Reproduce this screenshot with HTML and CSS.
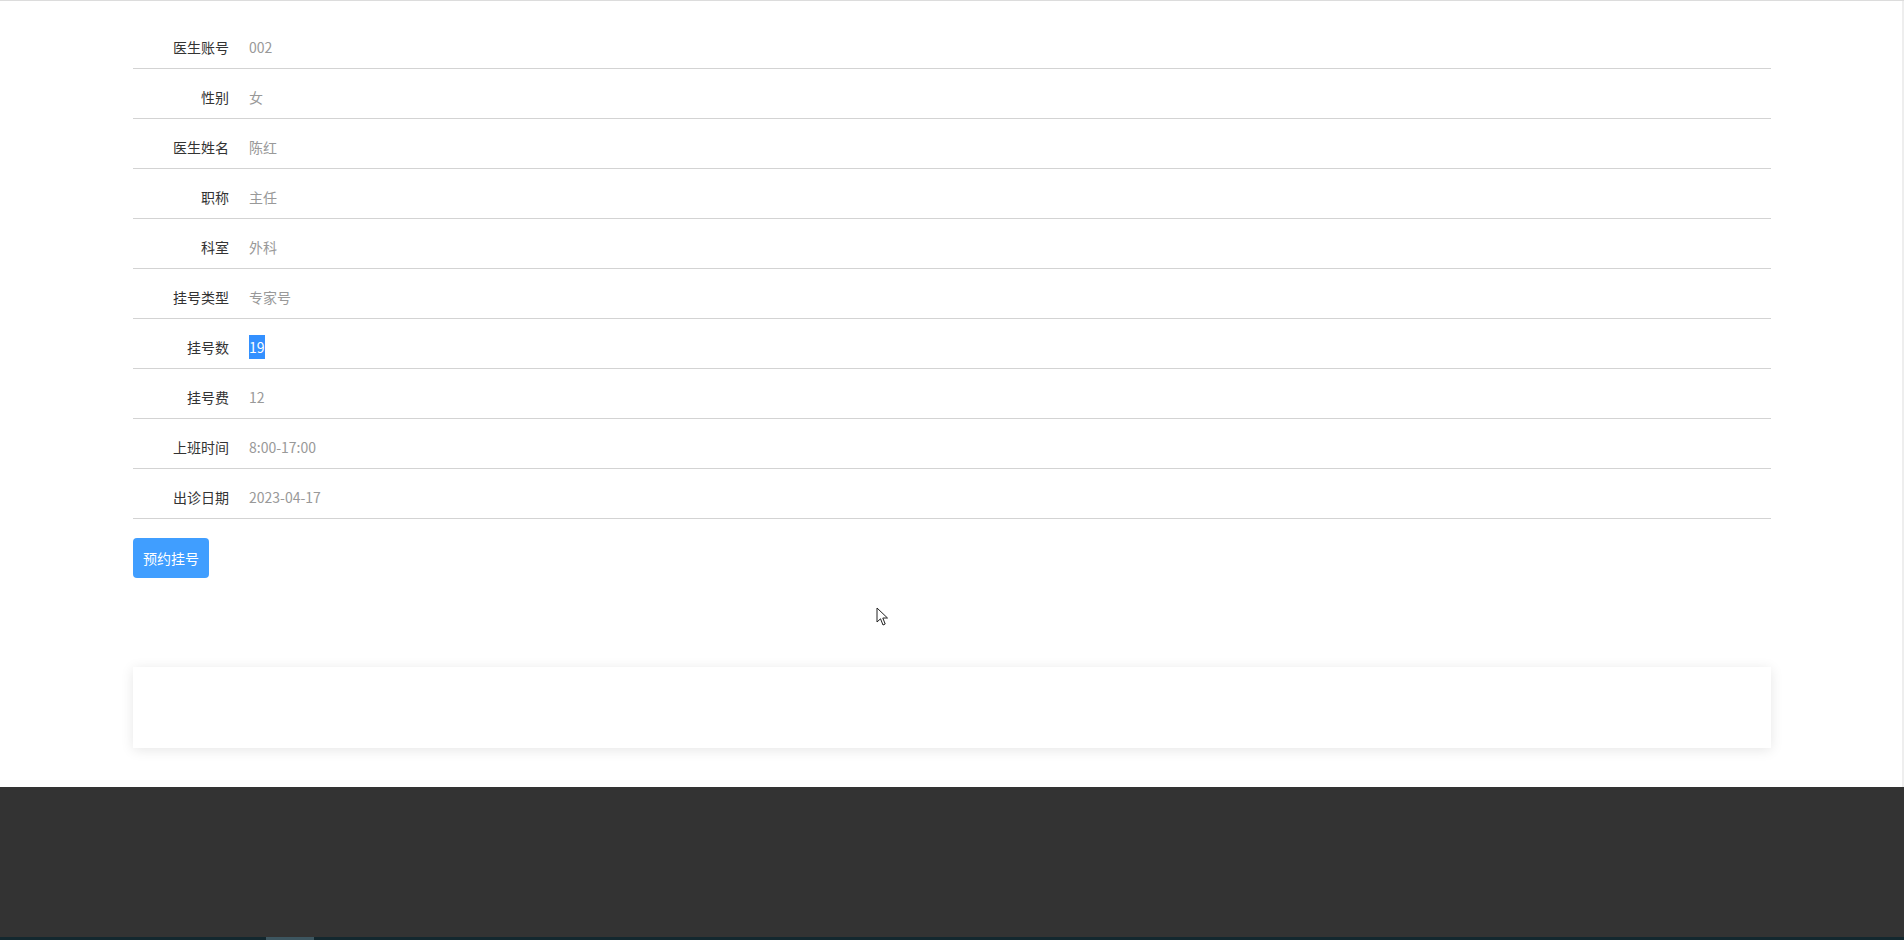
FILE: index.html
```html
<!DOCTYPE html>
<html lang="zh-CN">
<head>
    <meta charset="UTF-8">
    <title>医生详情</title>
    <link rel="stylesheet" href="styles.css">
</head>
<body>

<div class="page">
    <div class="main-content">
        <div class="info-list">
            <div class="info-row"><span class="label">医生账号</span><span class="value">002</span></div>
            <div class="info-row"><span class="label">性别</span><span class="value">女</span></div>
            <div class="info-row"><span class="label">医生姓名</span><span class="value">陈红</span></div>
            <div class="info-row"><span class="label">职称</span><span class="value">主任</span></div>
            <div class="info-row"><span class="label">科室</span><span class="value">外科</span></div>
            <div class="info-row"><span class="label">挂号类型</span><span class="value">专家号</span></div>
            <div class="info-row"><span class="label">挂号数</span><span class="value"><span class="selected">19</span></span></div>
            <div class="info-row"><span class="label">挂号费</span><span class="value">12</span></div>
            <div class="info-row"><span class="label">上班时间</span><span class="value">8:00-17:00</span></div>
            <div class="info-row"><span class="label">出诊日期</span><span class="value">2023-04-17</span></div>
        </div>

        <button class="btn-primary" type="button">预约挂号</button>

        <div class="card"></div>
    </div>

    <!-- mouse pointer from the screenshot -->
    <svg class="cursor" width="13" height="20" viewBox="0 0 13 20">
        <path d="M1 1 L1 15 L4.5 11.8 L7 18 L9.2 17 L6.8 11 L11.5 11 Z" fill="#fff" stroke="#222" stroke-width="1"/>
    </svg>
</div>

<div class="footer"></div>
<div class="taskbar"><span class="task-item"></span></div>

</body>
</html>
```

FILE: styles.css
```css
html, body {
    margin: 0;
    padding: 0;
    height: 100%;
    overflow: hidden;
    font-family: "Microsoft YaHei", "Noto Sans CJK SC", "Noto Sans", sans-serif;
    font-size: 14px;
    background: #fff;
}

.page {
    position: relative;
    border-top: 1px solid #dcdcdc;
    box-shadow: inset -2px 0 0 #eeeeee; /* thin edge on the right like the screenshot */
}

.main-content {
    width: 1638px;
    margin: 0 auto;
    padding-top: 18px;
    padding-bottom: 39px;
}

.info-row {
    display: flex;
    align-items: center;
    height: 36px;
    line-height: 36px;
    padding-top: 10px;
    padding-bottom: 3px;
    border-bottom: 1px solid #d3d3d3;
}

.label {
    width: 96px;
    text-align: right;
    color: #333;
}

.value {
    margin-left: 20px;
    color: #999;
}

.selected {
    display: inline-block;
    height: 24px;
    line-height: 24px;
    background: #3390ff;
    color: #fff;
}

.btn-primary {
    display: block;
    margin-top: 19px;
    height: 40px;
    padding: 0 10px;
    border: none;
    border-radius: 4px;
    background-color: #409eff;
    color: #fff;
    font-family: inherit;
    font-size: 14px;
    cursor: pointer;
}

.card {
    margin-top: 89px;
    height: 81px;
    background: #fff;
    box-shadow: 0 2px 12px rgba(0, 0, 0, 0.1);
}

.cursor {
    position: absolute;
    left: 876px;
    top: 606px;
}

.footer {
    height: 150px;
    background: #333333;
}

.taskbar {
    height: 3px;
    background: #13282f;
}

.task-item {
    display: block;
    margin-left: 266px;
    width: 48px;
    height: 3px;
    background: #3d5660;
}
```
